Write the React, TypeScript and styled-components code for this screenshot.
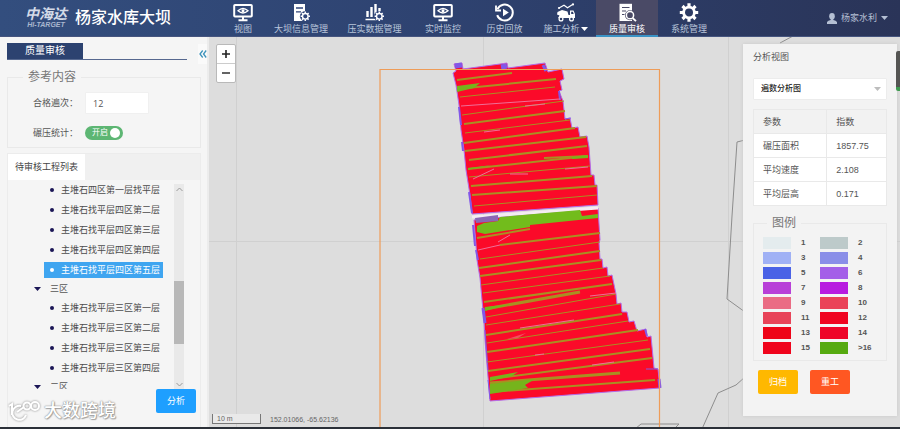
import React, { useState } from "react";
import styled, { createGlobalStyle, css } from "styled-components";

const GlobalStyle = createGlobalStyle`
  *, *::before, *::after { box-sizing: border-box; }
  body {
    margin: 0;
    background: #dcdcdc;
    font-family: "Liberation Sans", "Noto Sans CJK SC", sans-serif;
    font-size: 9px;
    line-height: 12px;
    color: #555;
  }
  button, input, select { font: inherit; color: inherit; margin: 0; }
  ul { list-style: none; margin: 0; padding: 0; }
`;

const Page = styled.div`
  display: flex;
  flex-direction: column;
  height: 100vh;
  overflow: hidden;
  border-bottom: 2px solid #2b3038;
`;

/* ---------- header ---------- */

const Header = styled.header`
  display: flex;
  flex: none;
  height: 37px;
  background: linear-gradient(90deg, #334e7e 0%, #2e4270 50%, #2a3458 100%);
  border-bottom: 1px solid #46557f;
`;

const Brand = styled.div`
  display: flex;
  align-items: center;
  gap: 8px;
  width: 221px;
  padding-left: 25px;
`;

const Logo = styled.div`
  display: flex;
  flex-direction: column;
  align-items: center;
  font-style: italic;
  font-weight: 700;
  color: #d4dbe8;
`;

const LogoName = styled.span`
  font-size: 14px;
  line-height: 13px;
`;

const LogoLatin = styled.span`
  font-size: 7px;
  line-height: 7px;
  color: #aab7cf;
`;

const SiteTitle = styled.h1`
  margin: 0;
  font-size: 16px;
  line-height: 20px;
  font-weight: 500;
  color: #fff;
  white-space: nowrap;
`;

const Nav = styled.nav`
  display: grid;
  grid-template-columns: 44px 72px 75px 62px 61px 61px 62px 62px;
`;

const NavItem = styled.a<{ $active?: boolean }>`
  display: flex;
  flex-direction: column;
  align-items: center;
  gap: 1px;
  padding-top: 3px;
  white-space: nowrap;
  text-decoration: none;
  color: #b9c5da;
  border-bottom: 2px solid transparent;
  svg { color: #fff; }
  ${(p) =>
    p.$active &&
    css`
      color: #fff;
      background: #4a4a66;
      border-bottom-color: #3a93c6;
    `}
`;

const NavLabel = styled.span`
  display: flex;
  align-items: center;
  gap: 1px;
`;

const UserButton = styled.button`
  display: flex;
  align-items: center;
  gap: 4px;
  margin-left: auto;
  padding: 0 12px 0 0;
  border: 0;
  background: none;
  color: #b4bfd3;
`;

/* ---------- sidebar ---------- */

const Body = styled.main`
  display: flex;
  flex: 1;
  min-height: 0;
`;

const Sidebar = styled.aside`
  position: relative;
  display: flex;
  flex-direction: column;
  flex: none;
  width: 209px;
  padding: 6px 6px 0 7px;
  background: #f5f5f5;
  border-right: 2px solid #ececec;
`;

const SidebarHead = styled.div`
  display: flex;
  width: 180px;
  border-bottom: 1px solid #56688f;
`;

const SidebarTitle = styled.h2`
  margin: 0;
  width: 76px;
  font-size: 10px;
  line-height: 16px;
  font-weight: 400;
  text-align: center;
  color: #fff;
  background: #2c4270;
`;

const CollapseButton = styled.button`
  position: absolute;
  top: 7px;
  right: 0;
  display: grid;
  place-items: center;
  width: 9px;
  height: 20px;
  padding: 0;
  border: 0;
  background: #fafafa;
  color: #3d93bb;
`;

const Group = styled.fieldset`
  margin: 0;
  min-width: 0;
  border: 1px solid #e9e9e9;
`;

const GroupTitle = styled.legend`
  padding: 0 5px;
  font-size: 12px;
  line-height: 16px;
  color: #777;
`;

const Criteria = styled(Group)`
  margin-top: 9px;
  padding: 7px 0 3px 25px;
`;

const CriteriaTitle = styled(GroupTitle)`
  margin-left: -10px;
`;

const FormRow = styled.div`
  display: flex;
  align-items: center;
  height: 22px;
  & + & { margin-top: 8px; }
`;

const FormLabel = styled.label`
  width: 52px;
`;

const CountInput = styled.input`
  width: 64px;
  height: 22px;
  padding: 0 7px;
  border: 1px solid #f0f0f0;
  border-radius: 1px;
  background: #fff;
  font-family: "Open Sans", sans-serif;
`;

const SwitchBox = styled.span`
  position: relative;
  display: block;
  width: 38px;
  height: 14px;
`;

const SwitchInput = styled.input`
  appearance: none;
  display: block;
  width: 38px;
  height: 14px;
  border-radius: 7px;
  background: #b5b5b5;
  &::after {
    content: "";
    position: absolute;
    top: 2px;
    left: 3px;
    width: 10px;
    height: 10px;
    border-radius: 50%;
    background: #fff;
  }
  &:checked { background: #5db673; }
  &:checked::after { left: 25px; }
`;

const SwitchText = styled.span<{ $on: boolean }>`
  position: absolute;
  top: 1px;
  left: ${(p) => (p.$on ? "7px" : "15px")};
  font-size: 8px;
  color: #fff;
  pointer-events: none;
`;

const Panel = styled.section`
  display: flex;
  flex-direction: column;
  margin-top: 5px;
  border: 1px solid #ececec;
  border-bottom: 0;
  flex: 1;
  min-height: 0;
`;

const TabBar = styled.div`
  display: flex;
  flex: none;
  background: #f0f0f0;
`;

const Tab = styled.button`
  height: 26px;
  padding: 0 7px;
  border: 0;
  background: #fff;
  color: #444;
`;

const TreeArea = styled.div`
  display: flex;
  justify-content: space-between;
  height: 209px;
  padding-right: 16px;
  overflow: hidden;
`;

const Tree = styled.ul`
  padding-left: 26px;
`;

const Branch = styled.li`
  display: flex;
  align-items: center;
  gap: 9px;
  height: 18px;
  color: #555;
  svg { color: #1b1656; }
`;

const Leaf = styled.li`
  display: flex;
  align-items: center;
  height: 20px;
  padding-left: 10px;
`;

const LeafButton = styled.button<{ $selected: boolean }>`
  display: flex;
  align-items: center;
  gap: 7px;
  height: 16px;
  padding: 0 3px 0 6px;
  border: 0;
  white-space: nowrap;
  background: ${(p) => (p.$selected ? "#3fa5f0" : "transparent")};
  color: ${(p) => (p.$selected ? "#fff" : "#4c4c4c")};
  &::before {
    content: "";
    width: 4px;
    height: 4px;
    border-radius: 50%;
    background: ${(p) => (p.$selected ? "#fff" : "#1b1656")};
  }
`;

const ScrollTrack = styled.div`
  display: flex;
  flex-direction: column;
  align-items: center;
  flex: none;
  width: 10px;
  margin-top: 4px;
  padding: 3px 0 2px;
  background: #e9e9e9;
  color: #999;
`;

const ScrollThumb = styled.div`
  width: 10px;
  height: 63px;
  margin: 89px 0 auto;
  background: #b8b8b8;
`;

const ActionButton = styled.button<{ $tone: string }>`
  width: 40px;
  height: 24px;
  padding: 0;
  border: 0;
  border-radius: 2px;
  color: #fff;
  background: ${(p) => p.$tone};
`;

const PanelFoot = styled.div`
  display: flex;
  justify-content: flex-end;
  padding-right: 4px;
`;

const Watermark = styled.div`
  position: absolute;
  left: 8px;
  bottom: 5px;
  display: flex;
  align-items: center;
  gap: 4px;
  font-size: 18px;
  line-height: 22px;
  font-weight: 500;
  color: #fff;
  text-shadow: 0 0 1px #888, 0 0 2px #999, 1px 1px 1px #aaa;
  svg { filter: drop-shadow(0 0 1px #888); }
`;

/* ---------- map ---------- */

const MapArea = styled.section`
  position: relative;
  flex: 1;
  min-width: 0;
  background: #dddddd;
  overflow: hidden;
`;

const MapCanvas = styled.svg`
  display: block;
  width: 100%;
  height: 100%;
`;

const ZoomControl = styled.div`
  position: absolute;
  top: 7px;
  left: 7px;
  display: flex;
  flex-direction: column;
  border: 1px solid #b9b9b9;
  border-radius: 2px;
  background: #fff;
`;

const ZoomButton = styled.button`
  display: grid;
  place-items: center;
  width: 18px;
  height: 18px;
  padding: 0;
  border: 0;
  background: none;
  color: #222;
  & + & {
    height: 19px;
    border-top: 1px solid #ccc;
  }
`;

const MapStatus = styled.div`
  position: absolute;
  left: 3px;
  bottom: 3px;
  display: flex;
  align-items: center;
  gap: 9px;
  font-size: 7px;
  line-height: 9px;
  color: #666;
`;

const ScaleBar = styled.span`
  width: 49px;
  padding-left: 4px;
  border: 1px solid #777;
  border-top: 0;
  background: #e9e9e9;
`;

const SideHandle = styled.div`
  position: absolute;
  top: 14px;
  right: 0;
  width: 4px;
  height: 40px;
  background: #555553;
  border-bottom: 4px solid #3f9a50;
  border-radius: 2px 0 0 2px;
`;

/* ---------- analysis panel ---------- */

const Analysis = styled.aside`
  position: absolute;
  top: 7px;
  right: 3px;
  width: 154px;
  padding: 7px 10px 22px;
  background: #f3f3f3;
  box-shadow: 0 0 3px #c8c8c8;
`;

const AnalysisTitle = styled.h2`
  margin: 0;
  font-size: 9px;
  line-height: 12px;
  font-weight: 400;
`;

const SelectBox = styled.div`
  position: relative;
  margin-top: 15px;
  svg {
    position: absolute;
    right: 6px;
    top: 9px;
    color: #bdbdbd;
    pointer-events: none;
  }
`;

const Select = styled.select`
  appearance: none;
  display: block;
  width: 100%;
  height: 22px;
  padding: 0 7px;
  border: 1px solid #ececec;
  border-radius: 1px;
  background: #fff;
  font-size: 8px;
  font-weight: 500;
  color: #222;
`;

const Table = styled.table`
  width: 100%;
  margin-top: 9px;
  border-collapse: collapse;
  table-layout: fixed;
  background: #fff;
  th, td {
    height: 24px;
    padding: 0 9px;
    border: 1px solid #e9e9e9;
    font-weight: 400;
    text-align: left;
  }
  thead th { background: #f2f2f2; }
  th:first-child { width: 55%; }
`;

const Legend = styled(Group)`
  margin-top: 9px;
  padding: 6px 0 6px 9px;
`;

const LegendTitle = styled(GroupTitle)`
  margin-left: 4px;
`;

const LegendGrid = styled.ul`
  display: grid;
  grid-template-columns: 57px 1fr;
  row-gap: 3px;
`;

const LegendItem = styled.li`
  display: flex;
  align-items: center;
  gap: 10px;
  height: 12px;
  font-size: 8px;
  font-weight: 700;
  color: #555;
`;

const Swatch = styled.span<{ $color: string }>`
  width: 28px;
  height: 12px;
  background: ${(p) => p.$color};
`;

const Buttons = styled.div`
  display: flex;
  gap: 12px;
  margin-top: 9px;
  padding-left: 5px;
`;

/* ---------- icons ---------- */

const Icon = ({ children }: { children: React.ReactNode }) => (
  <svg width="20" height="19" viewBox="0 0 20 19" fill="none" stroke="currentColor" strokeWidth="2" aria-hidden="true">
    {children}
  </svg>
);

const MonitorIcon = () => (
  <Icon>
    <rect x="1.2" y="2" width="17.6" height="11.5" rx="0.8" />
    <path d="M5 7.8Q10 3.2 15 7.8Q10 12.2 5 7.8Z" strokeWidth="1.3" />
    <circle cx="10" cy="7.7" r="1.5" fill="currentColor" stroke="none" />
    <path d="M10 13.5V16.5M5.5 17.2H14.5" />
  </Icon>
);

const cogTeeth = (cx: number, cy: number, inner: number, outer: number) =>
  Array.from({ length: 8 }, (_, i) => {
    const a = (i * Math.PI) / 4;
    return `M${cx + Math.cos(a) * inner} ${cy + Math.sin(a) * inner}L${cx + Math.cos(a) * outer} ${cy + Math.sin(a) * outer}`;
  }).join("");

const SmallCog = () => (
  <>
    <circle cx="14.3" cy="13.3" r="5.4" fill="#30467a" stroke="none" />
    <circle cx="14.3" cy="13.3" r="2.8" strokeWidth="1.4" />
    <path d={cogTeeth(14.3, 13.3, 3, 4.7)} strokeWidth="1.5" />
  </>
);

const DocCogIcon = () => (
  <Icon>
    <path d="M3 1H14V18H3Z" fill="currentColor" stroke="none" />
    <path d="M5 5H12M5 8.8H10" stroke="#30467a" strokeWidth="1.3" />
    <SmallCog />
  </Icon>
);

const ChartCogIcon = () => (
  <Icon>
    <path d="M2.5 8V14M6.5 4V14M10.5 1V14M14.5 5V13" strokeWidth="2.4" />
    <path d="M0.5 16.5H12" strokeWidth="1.5" />
    <SmallCog />
  </Icon>
);

const ReplayIcon = () => (
  <Icon>
    <path d="M2.5 6.2A8 8 0 1 1 2.2 12.2" />
    <path d="M1 2.5V7.5H6" strokeWidth="1.8" />
    <path d="M8 5.8L13.8 9.5L8 13.2Z" fill="currentColor" stroke="none" />
  </Icon>
);

const TruckIcon = () => (
  <Icon>
    <path d="M3 5L8 2.2L11.5 4.8L17 1.2" strokeWidth="1.1" />
    <circle cx="3" cy="5" r="1.1" fill="currentColor" stroke="none" />
    <circle cx="17" cy="1.4" r="1.1" fill="currentColor" stroke="none" />
    <path d="M1.5 9L6 7L11.5 8.5L12.5 12H14V7.5H17.5L19 11V15H2L3.5 12.5L1 11.5Z" fill="currentColor" stroke="none" />
    <path d="M15.2 8.8H16.9L17.7 11H15.2Z" fill="#2d3d69" stroke="none" />
    <circle cx="5" cy="16" r="1.9" fill="#2d3d69" strokeWidth="1.3" />
    <circle cx="15.5" cy="16" r="1.9" fill="#2d3d69" strokeWidth="1.3" />
  </Icon>
);

const DocSearchIcon = () => (
  <Icon>
    <path d="M2.5 0.8H15V18H2.5Z" fill="currentColor" stroke="none" />
    <path d="M5 4.5H12.5M5 8H9M5 11.5H7.5" stroke="#4a4a66" strokeWidth="1.2" />
    <circle cx="13" cy="12.2" r="5" fill="#4a4a66" stroke="none" />
    <circle cx="13" cy="12.2" r="3.6" strokeWidth="1.5" />
    <path d="M15.6 15L19 18.2" strokeWidth="1.8" />
  </Icon>
);

const CogIcon = () => (
  <Icon>
    <circle cx="10" cy="9.5" r="5.4" strokeWidth="2.8" />
    <path d={cogTeeth(10, 9.5, 6, 9.2)} strokeWidth="3.2" />
  </Icon>
);

const Caret = () => (
  <svg width="7" height="4" viewBox="0 0 7 4" aria-hidden="true">
    <path d="M0 0H7L3.5 4Z" fill="currentColor" />
  </svg>
);

const Chevron = ({ up }: { up?: boolean }) => (
  <svg width="7" height="5" viewBox="0 0 7 5" fill="none" stroke="currentColor" aria-hidden="true">
    <path d={up ? "M0.5 4L3.5 1L6.5 4" : "M0.5 1L3.5 4L6.5 1"} />
  </svg>
);

/* ---------- data ---------- */

const navItems = [
  { label: "视图", icon: <MonitorIcon /> },
  { label: "大坝信息管理", icon: <DocCogIcon /> },
  { label: "压实数据管理", icon: <ChartCogIcon /> },
  { label: "实时监控", icon: <MonitorIcon /> },
  { label: "历史回放", icon: <ReplayIcon /> },
  { label: "施工分析", icon: <TruckIcon />, menu: true },
  { label: "质量审核", icon: <DocSearchIcon />, active: true },
  { label: "系统管理", icon: <CogIcon /> },
];

const zoneFour = [
  "主堆石四区第一层找平层",
  "主堆石找平层四区第二层",
  "主堆石找平层四区第三层",
  "主堆石找平层四区第四层",
  "主堆石找平层四区第五层",
];

const zoneThree = [
  "主堆石找平层三区第一层",
  "主堆石找平层三区第二层",
  "主堆石找平层三区第三层",
  "主堆石找平层三区第四层",
];

const metrics = [
  ["碾压面积", "1857.75"],
  ["平均速度", "2.108"],
  ["平均层高", "0.171"],
];

const legend = [
  ["1", "#e4ecee"], ["2", "#bdcaca"],
  ["3", "#a0b1f5"], ["4", "#8a8ee8"],
  ["5", "#4a62e6"], ["6", "#a45fe8"],
  ["7", "#b840d8"], ["8", "#b81ce0"],
  ["9", "#ea6c84"], ["10", "#ea4258"],
  ["11", "#e84459"], ["12", "#f00420"],
  ["13", "#ee0418"], ["14", "#ee0428"],
  ["15", "#f0041c"], [">16", "#56aa10"],
];

const upperBlock =
  "454,64 462,63 463,69 500,64 507,63 508,68 545,63 548,72 562,69 564,79 560,81 562,90 559,91 563,101 565,119 570,118 572,128 578,127 580,137 587,136 589,147 591,175 594,175 595,185 597,185 598,205 472,214 470,195 466,170 464,150 461,130 459,105 456,85 453,73 456,71";

const lowerBlock =
  "474,220 598,208 600,240 599,242 600,259 602,259 603,268 607,267 608,276 612,275 616,294 617,304 621,303 622,312 627,312 629,322 634,321 637,331 646,329 647,337 651,336 654,368 658,369 660,388 490,401 487,365 485,340 484,320 482,300 480,278 477,260 476,245";

/* x1, y1, x2, y2, width */
const tracks: number[][] = [
  [457, 80, 512, 73, 2], [457, 89, 556, 79, 2], [460, 97, 555, 87, 1], [462, 115, 564, 101, 1],
  [464, 124, 565, 111, 2], [465, 133, 570, 120, 1], [464, 143, 575, 128, 2], [465, 151, 586, 137, 2],
  [469, 160, 587, 146, 2], [468, 169, 588, 156, 2], [544, 158, 588, 156, 2], [469, 177, 590, 166, 1],
  [471, 186, 592, 176, 2], [472, 195, 597, 186, 2], [474, 206, 597, 195, 1],
  [477, 238, 530, 229, 2], [500, 245, 600, 233, 2], [480, 259, 600, 242, 1], [479, 268, 600, 251, 2],
  [480, 276, 601, 260, 2], [481, 285, 603, 268, 1], [483, 293, 610, 276, 1], [484, 302, 612, 284, 2],
  [485, 309, 580, 292, 3], [486, 317, 616, 294, 1], [486, 325, 620, 304, 1], [486, 335, 622, 314, 2],
  [487, 343, 628, 321, 1], [487, 352, 638, 330, 2], [487, 362, 648, 340, 1], [488, 371, 650, 349, 2],
  [490, 379, 652, 358, 2], [490, 383, 620, 373, 3], [491, 392, 655, 380, 2],
];

const paleTracks: number[][] = [
  [461, 106, 560, 99, 1], [525, 106, 545, 104, 1], [484, 132, 500, 130, 1], [510, 174, 528, 174, 1],
  [473, 179, 494, 169, 1], [478, 250, 500, 245, 1], [520, 328, 574, 320, 1], [535, 355, 544, 354, 1],
  [592, 365, 614, 362, 1], [590, 296, 616, 293, 1], [565, 169, 588, 167, 1], [498, 242, 510, 235, 1],
];

const edges: number[][] = [
  [455, 66, 462, 65, 5], [501, 67, 507, 66, 5], [543, 65, 546, 71, 3], [459, 107, 461, 125, 2],
  [462, 142, 463, 151, 2], [559, 91, 560, 100, 2], [565, 119, 571, 118, 1], [473, 225, 475, 246, 2],
  [476, 250, 478, 260, 2], [483, 308, 485, 323, 3], [485, 330, 488, 370, 1], [488, 380, 490, 399, 1],
  [645, 329, 647, 336, 2], [659, 379, 660, 388, 3], [646, 369, 658, 369, 1], [469, 192, 472, 213, 2],
];

const Lines = ({ data, color }: { data: number[][]; color: string }) => (
  <g stroke={color}>
    {data.map(([x1, y1, x2, y2, w], i) => (
      <line key={i} x1={x1} y1={y1} x2={x2} y2={y2} strokeWidth={w} />
    ))}
  </g>
);

const CompactionMap = () => (
  <MapCanvas viewBox="209 37 691 390" preserveAspectRatio="xMidYMid slice" role="img" aria-label="碾压遍数">
    <path d="M236.5 37V428M483.5 37V428M728.5 37V428M209 241.500H900" stroke="#d0d0d0" />
    <g fill="none" stroke="#8d8d8d">
      <path d="M780 43L793 36M745 140L737 142L732 216L727 299L745 312M745 377L736 385L718 393L702 429" />
      <path d="M635 429L641 424H679L674 429" />
    </g>
    <polygon points={upperBlock} fill="#fb0a29" stroke="#b36be8" strokeWidth="1" />
    <polygon points={lowerBlock} fill="#fb0a29" stroke="#b36be8" strokeWidth="1" />
    <path d="M472 217L598 208" stroke="#f4ecf4" strokeWidth="3" />
    <Lines data={edges} color="#8258e8" />
    <Lines data={tracks} color="#a98f22" />
    <Lines data={paleTracks} color="#ee7098" />
    <path d="M457 86L480 83L474 88L457 92Z" fill="#76b41c" />
    <path d="M477 226L484 223L498 221L500 217L580 210L582 216L598 214V218L530 225L530 227L485 234L477 232Z" fill="#72bc1c" />
    <path d="M475 218L498 215V221L476 223Z" fill="#8a67b5" />
    <path d="M468 168L492 165L468 170ZM572 157L588 155V158L572 159ZM485 307L512 304L485 311ZM490 377L518 372L512 376L490 381ZM490 384L535 379L525 385L528 388L490 394Z" fill="#76b41c" />
    <path d="M507 339L526 333L518 338Z" fill="#f05060" />
    <path d="M380 428V69.5H659.5V428" fill="none" stroke="#ee9c58" strokeWidth="1.2" />
  </MapCanvas>
);

const WatermarkIcon = () => (
  <svg width="32" height="22" viewBox="0 0 32 22" fill="none" stroke="#fff" strokeWidth="2" aria-hidden="true">
    <path d="M1 6L4 4V15" />
    <path d="M13 6A7 7 0 1 0 18 15M9 12L16 7" />
    <circle cx="19" cy="6" r="3.5" />
    <circle cx="27" cy="6" r="4" />
  </svg>
);

export default function App() {
  const [selected, setSelected] = useState(zoneFour[4]);
  const [on, setOn] = useState(true);

  const leaf = (name: string) => (
    <Leaf key={name}>
      <LeafButton $selected={name === selected} onClick={() => setSelected(name)}>
        {name}
      </LeafButton>
    </Leaf>
  );

  return (
    <>
      <GlobalStyle />
      <Page>
        <Header>
          <Brand>
            <Logo>
              <LogoName>中海达</LogoName>
              <LogoLatin>HI-TARGET</LogoLatin>
            </Logo>
            <SiteTitle>杨家水库大坝</SiteTitle>
          </Brand>
          <Nav>
            {navItems.map((item) => (
              <NavItem key={item.label} href="#" $active={item.active}>
                {item.icon}
                <NavLabel>
                  {item.label}
                  {item.menu && <Caret />}
                </NavLabel>
              </NavItem>
            ))}
          </Nav>
          <UserButton>
            <svg width="10" height="11" viewBox="0 0 10 11" fill="currentColor" aria-hidden="true">
              <ellipse cx="5" cy="3.3" rx="2.8" ry="3.3" />
              <path d="M0 11V9Q1 7.5 3.7 7V5.5H6.3V7Q9 7.5 10 9V11Z" />
            </svg>
            杨家水利
            <Caret />
          </UserButton>
        </Header>

        <Body>
          <Sidebar>
            <SidebarHead>
              <SidebarTitle>质量审核</SidebarTitle>
            </SidebarHead>
            <CollapseButton aria-label="收起">
              <svg width="8" height="8" viewBox="0 0 8 8" fill="none" stroke="currentColor" strokeWidth="1.3" aria-hidden="true">
                <path d="M3.7 0.5L1 4L3.7 7.5M7.2 0.5L4.5 4L7.2 7.5" />
              </svg>
            </CollapseButton>

            <Criteria>
              <CriteriaTitle>参考内容</CriteriaTitle>
              <FormRow>
                <FormLabel htmlFor="passes">合格遍次：</FormLabel>
                <CountInput id="passes" defaultValue="12" />
              </FormRow>
              <FormRow>
                <FormLabel htmlFor="stats">碾压统计：</FormLabel>
                <SwitchBox>
                  <SwitchInput id="stats" type="checkbox" role="switch" checked={on} onChange={() => setOn(!on)} />
                  <SwitchText $on={on}>{on ? "开启" : "关闭"}</SwitchText>
                </SwitchBox>
              </FormRow>
            </Criteria>

            <Panel>
              <TabBar>
                <Tab>待审核工程列表</Tab>
              </TabBar>
              <TreeArea>
                <Tree>
                  {zoneFour.map(leaf)}
                  <Branch><Caret />三区</Branch>
                  {zoneThree.map(leaf)}
                  <Branch><Caret />二区</Branch>
                </Tree>
                <ScrollTrack>
                  <Chevron up />
                  <ScrollThumb />
                  <Chevron />
                </ScrollTrack>
              </TreeArea>
              <PanelFoot>
                <ActionButton $tone="#1e9fff">分析</ActionButton>
              </PanelFoot>
            </Panel>
            <Watermark>
              <WatermarkIcon />
              大数跨境
            </Watermark>
          </Sidebar>

          <MapArea>
            <CompactionMap />
            <ZoomControl>
              <ZoomButton aria-label="放大">
                <svg width="8" height="8" viewBox="0 0 8 8" stroke="currentColor" strokeWidth="1.6" aria-hidden="true">
                  <path d="M4 0V8M0 4H8" />
                </svg>
              </ZoomButton>
              <ZoomButton aria-label="缩小">
                <svg width="8" height="8" viewBox="0 0 8 8" stroke="currentColor" strokeWidth="1.4" aria-hidden="true">
                  <path d="M0 4H8" />
                </svg>
              </ZoomButton>
            </ZoomControl>
            <MapStatus>
              <ScaleBar>10 m</ScaleBar>
              <span>152.01066, -65.62136</span>
            </MapStatus>

            <Analysis>
              <AnalysisTitle>分析视图</AnalysisTitle>
              <SelectBox>
                <Select aria-label="分析视图" defaultValue="passes">
                  <option value="passes">遍数分析图</option>
                </Select>
                <Caret />
              </SelectBox>
              <Table>
                <thead>
                  <tr><th scope="col">参数</th><th scope="col">指数</th></tr>
                </thead>
                <tbody>
                  {metrics.map(([name, value]) => (
                    <tr key={name}><th scope="row">{name}</th><td>{value}</td></tr>
                  ))}
                </tbody>
              </Table>
              <Legend>
                <LegendTitle>图例</LegendTitle>
                <LegendGrid>
                  {legend.map(([label, color]) => (
                    <LegendItem key={label}>
                      <Swatch $color={color} />
                      {label}
                    </LegendItem>
                  ))}
                </LegendGrid>
              </Legend>
              <Buttons>
                <ActionButton $tone="#ffb800">归档</ActionButton>
                <ActionButton $tone="#ff5722">重工</ActionButton>
              </Buttons>
            </Analysis>
            <SideHandle />
          </MapArea>
        </Body>
      </Page>
    </>
  );
}
